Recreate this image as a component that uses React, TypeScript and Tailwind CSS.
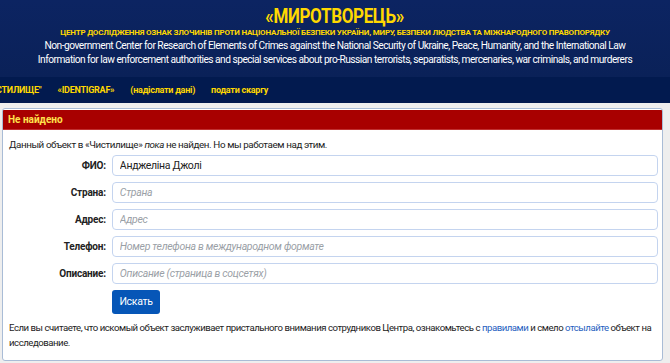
import React from 'react';

const fields = [
  { label: 'ФИО:', value: 'Анджеліна Джолі', placeholder: '' },
  { label: 'Страна:', value: '', placeholder: 'Страна' },
  { label: 'Адрес:', value: '', placeholder: 'Адрес' },
  { label: 'Телефон:', value: '', placeholder: 'Номер телефона в международном формате' },
  { label: 'Описание:', value: '', placeholder: 'Описание (страница в соцсетях)' },
];

export default function App() {
  return (
    <div className="w-[670px] h-[363px] overflow-hidden bg-[#eeeeee] font-['Roboto',sans-serif]">
      <header className="bg-gradient-to-b from-[#0c2462] to-[#0a2158] h-[77px] flex flex-col items-center pt-[5px] text-center">
        <h1 className="text-[#ffd800] font-bold text-[20px] leading-[23px] tracking-[-0.4px] scale-x-[0.85]">«МИРОТВОРЕЦЬ»</h1>
        <p className="text-[#ffd800] font-bold text-[8px] leading-[10px] tracking-[-0.2px] whitespace-nowrap">
          ЦЕНТР ДОСЛІДЖЕННЯ ОЗНАК ЗЛОЧИНІВ ПРОТИ НАЦІОНАЛЬНОЇ БЕЗПЕКИ УКРАЇНИ, МИРУ, БЕЗПЕКИ ЛЮДСТВА ТА МІЖНАРОДНОГО ПРАВОПОРЯДКУ
        </p>
        <p className="text-white text-[10.2px] leading-[14px] mt-[1px] tracking-[-0.5px] whitespace-nowrap">
          Non-government Center for Research of Elements of Crimes against the National Security of Ukraine, Peace, Humanity, and the International Law
        </p>
        <p className="text-white text-[10.2px] leading-[14px] tracking-[-0.52px] whitespace-nowrap">
          Information for law enforcement authorities and special services about pro-Russian terrorists, separatists, mercenaries, war criminals, and murderers
        </p>
      </header>
      <nav className="bg-[#021a4f] h-[26px] flex items-center gap-[16px] pt-[2px] -ml-[4px] text-[#ffd800] font-bold text-[9px] tracking-[-0.25px] whitespace-nowrap">
        <span>СТИЛИЩЕ"</span>
        <span>«IDENTIGRAF»</span>
        <span>(надіслати дані)</span>
        <span>подати скаргу</span>
      </nav>
      <div className="h-[5px]" />
      <section className="ml-[2px] w-[661px] bg-white border border-[#a9bcd6] rounded-[3px] overflow-hidden">
        <div className="bg-[#a80000] h-[20px] flex items-center px-[5px] text-[#ffe34d] font-bold text-[10px] mt-[1px] border-b border-[#c03030]">
          Не найдено
        </div>
        <div className="pl-[6px] pr-[4px] pt-[8px] text-[#222] text-[9.8px] tracking-[-0.4px]">
          <p className="leading-[14px]">
            Данный объект в «Чистилище» <em className="italic">пока</em> не найден. Но мы работаем над этим.
          </p>
          <div className="mt-[3px] flex flex-col gap-[6px]">
            {fields.map((f) => (
              <div key={f.label} className="flex items-center">
                <label className="w-[103px] pr-[6px] text-right font-bold text-[10px] tracking-[-0.2px]">{f.label}</label>
                <input
                  readOnly
                  value={f.value}
                  placeholder={f.placeholder}
                  className="w-[547px] h-[21px] px-[7px] border border-[#c4d4ef] rounded-[4px] text-[10.5px] tracking-[-0.3px] text-[#222] placeholder:text-[#9aa0a6] placeholder:italic outline-none"
                />
              </div>
            ))}
          </div>
          <div className="pl-[103px] mt-[6px]">
            <button className="w-[48px] h-[24px] bg-[#0656b7] text-white rounded-[3px] text-[10.5px] tracking-[-0.3px]">Искать</button>
          </div>
          <p className="mt-[6px] leading-[15px] pb-[10px] text-[9.6px] tracking-[-0.46px]">
            Если вы считаете, что искомый объект заслуживает пристального внимания сотрудников Центра, ознакомьтесь с{' '}
            <a className="text-[#1f5fbf]">правилами</a> и смело <a className="text-[#1f5fbf]">отсылайте</a> объект на исследование.
          </p>
        </div>
      </section>
    </div>
  );
}
